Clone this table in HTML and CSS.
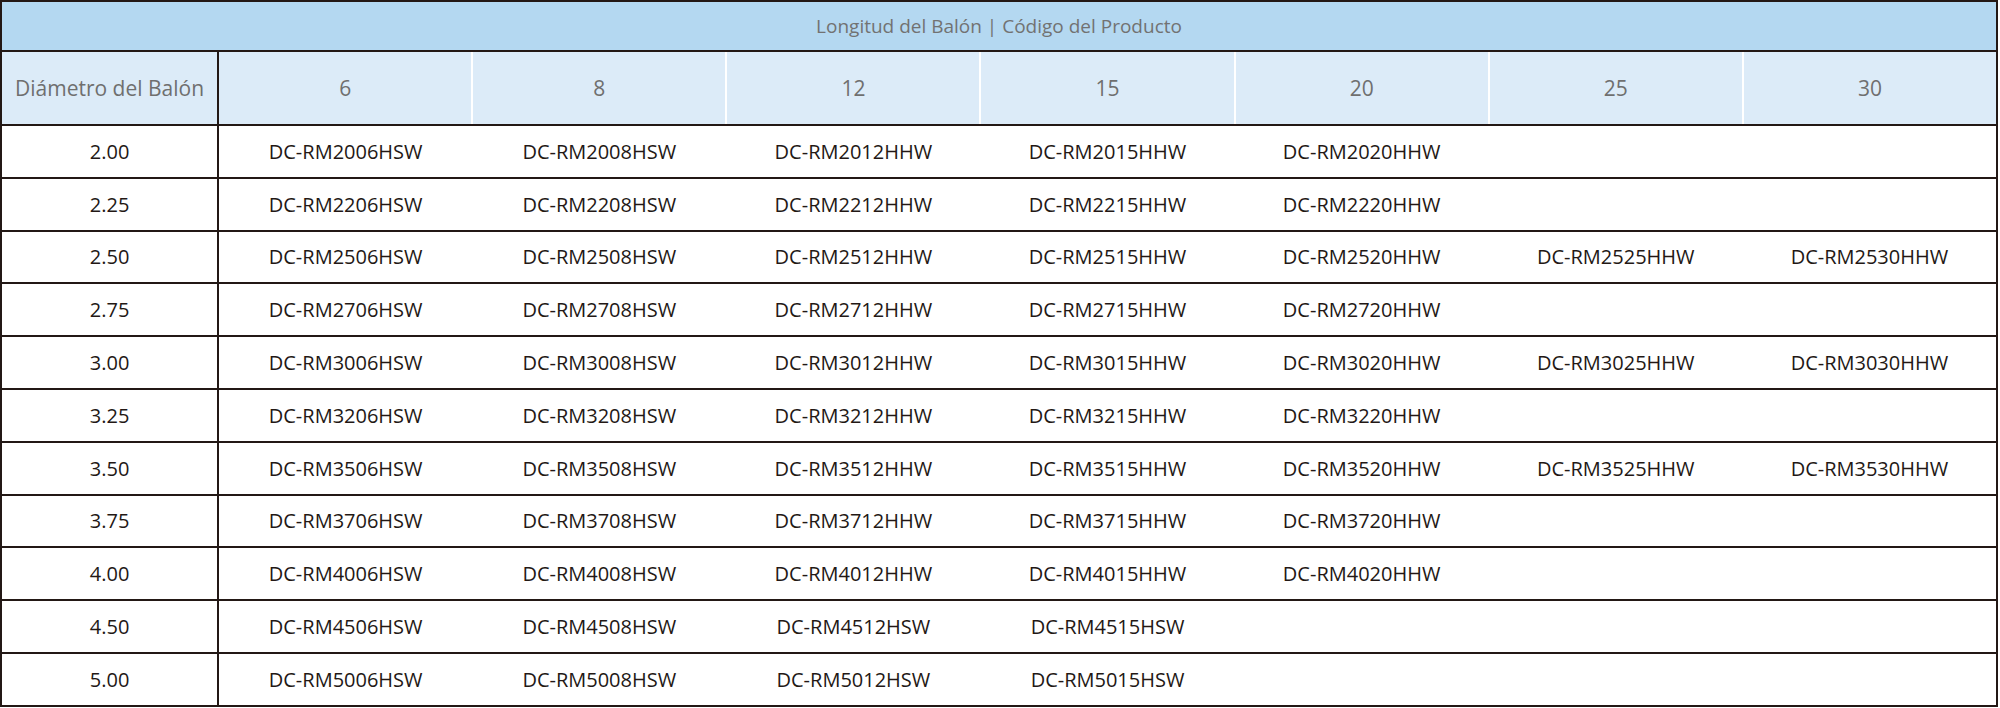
FILE: index.html
```html
<!DOCTYPE html>
<html lang="es">
<head>
    <meta charset="UTF-8">
    <meta name="viewport" content="width=device-width, initial-scale=1.0">
    <title>Longitud del Balón | Código del Producto</title>
    <link rel="stylesheet" href="styles.css">
</head>
<body>

  <!-- Product code table -->
  <table class="codes">
    <colgroup>
      <col class="col-diam">
      <col span="7" class="col-len">
    </colgroup>
    <thead>
      <tr class="title-row">
        <th colspan="8">Longitud del Balón | Código del Producto</th>
      </tr>
      <tr class="head-row">
        <th class="first">Diámetro del Balón</th>
        <th>6</th>
        <th>8</th>
        <th>12</th>
        <th>15</th>
        <th>20</th>
        <th>25</th>
        <th>30</th>
      </tr>
    </thead>
    <tbody>
      <tr><td class="first">2.00</td><td>DC-RM2006HSW</td><td>DC-RM2008HSW</td><td>DC-RM2012HHW</td><td>DC-RM2015HHW</td><td>DC-RM2020HHW</td><td></td><td></td></tr>
      <tr><td class="first">2.25</td><td>DC-RM2206HSW</td><td>DC-RM2208HSW</td><td>DC-RM2212HHW</td><td>DC-RM2215HHW</td><td>DC-RM2220HHW</td><td></td><td></td></tr>
      <tr><td class="first">2.50</td><td>DC-RM2506HSW</td><td>DC-RM2508HSW</td><td>DC-RM2512HHW</td><td>DC-RM2515HHW</td><td>DC-RM2520HHW</td><td>DC-RM2525HHW</td><td>DC-RM2530HHW</td></tr>
      <tr><td class="first">2.75</td><td>DC-RM2706HSW</td><td>DC-RM2708HSW</td><td>DC-RM2712HHW</td><td>DC-RM2715HHW</td><td>DC-RM2720HHW</td><td></td><td></td></tr>
      <tr><td class="first">3.00</td><td>DC-RM3006HSW</td><td>DC-RM3008HSW</td><td>DC-RM3012HHW</td><td>DC-RM3015HHW</td><td>DC-RM3020HHW</td><td>DC-RM3025HHW</td><td>DC-RM3030HHW</td></tr>
      <tr><td class="first">3.25</td><td>DC-RM3206HSW</td><td>DC-RM3208HSW</td><td>DC-RM3212HHW</td><td>DC-RM3215HHW</td><td>DC-RM3220HHW</td><td></td><td></td></tr>
      <tr><td class="first">3.50</td><td>DC-RM3506HSW</td><td>DC-RM3508HSW</td><td>DC-RM3512HHW</td><td>DC-RM3515HHW</td><td>DC-RM3520HHW</td><td>DC-RM3525HHW</td><td>DC-RM3530HHW</td></tr>
      <tr><td class="first">3.75</td><td>DC-RM3706HSW</td><td>DC-RM3708HSW</td><td>DC-RM3712HHW</td><td>DC-RM3715HHW</td><td>DC-RM3720HHW</td><td></td><td></td></tr>
      <tr><td class="first">4.00</td><td>DC-RM4006HSW</td><td>DC-RM4008HSW</td><td>DC-RM4012HHW</td><td>DC-RM4015HHW</td><td>DC-RM4020HHW</td><td></td><td></td></tr>
      <tr><td class="first">4.50</td><td>DC-RM4506HSW</td><td>DC-RM4508HSW</td><td>DC-RM4512HSW</td><td>DC-RM4515HSW</td><td></td><td></td><td></td></tr>
      <tr><td class="first">5.00</td><td>DC-RM5006HSW</td><td>DC-RM5008HSW</td><td>DC-RM5012HSW</td><td>DC-RM5015HSW</td><td></td><td></td><td></td></tr>
    </tbody>
  </table>

</body>
</html>
```

FILE: styles.css
```css
body {
    margin: 0;
    background-color: #fff;
    font-family: "Open Sans", "Noto Sans", Arial, sans-serif;
}
.codes {
    width: 1998px;
    border-collapse: collapse;
    table-layout: fixed;
    border: 2px solid #231815;
}
.col-diam {
    width: 217px;
}
.col-len {
    width: 254px;
}
.codes th,
.codes td {
    padding: 0;
    text-align: center;
    vertical-align: middle;
    font-weight: normal;
}
.title-row th {
    height: 48px;
    background-color: #b4d8f1;
    color: #727272;
    font-size: 19px;
    border-bottom: 2px solid #231815;
}
.head-row th {
    height: 72px;
    background-color: #dcebf8;
    color: #6f6f6f;
    font-size: 21px;
    border-left: 2px solid #fff;
    border-bottom: 2px solid #231815;
}
.head-row th.first {
    border-left: none;
    border-right: 2px solid #231815;
}
.codes td {
    height: 50.8px;
    color: #231815;
    font-size: 20px;
    border-bottom: 2px solid #231815;
}
.codes td.first {
    border-right: 2px solid #231815;
}
```
